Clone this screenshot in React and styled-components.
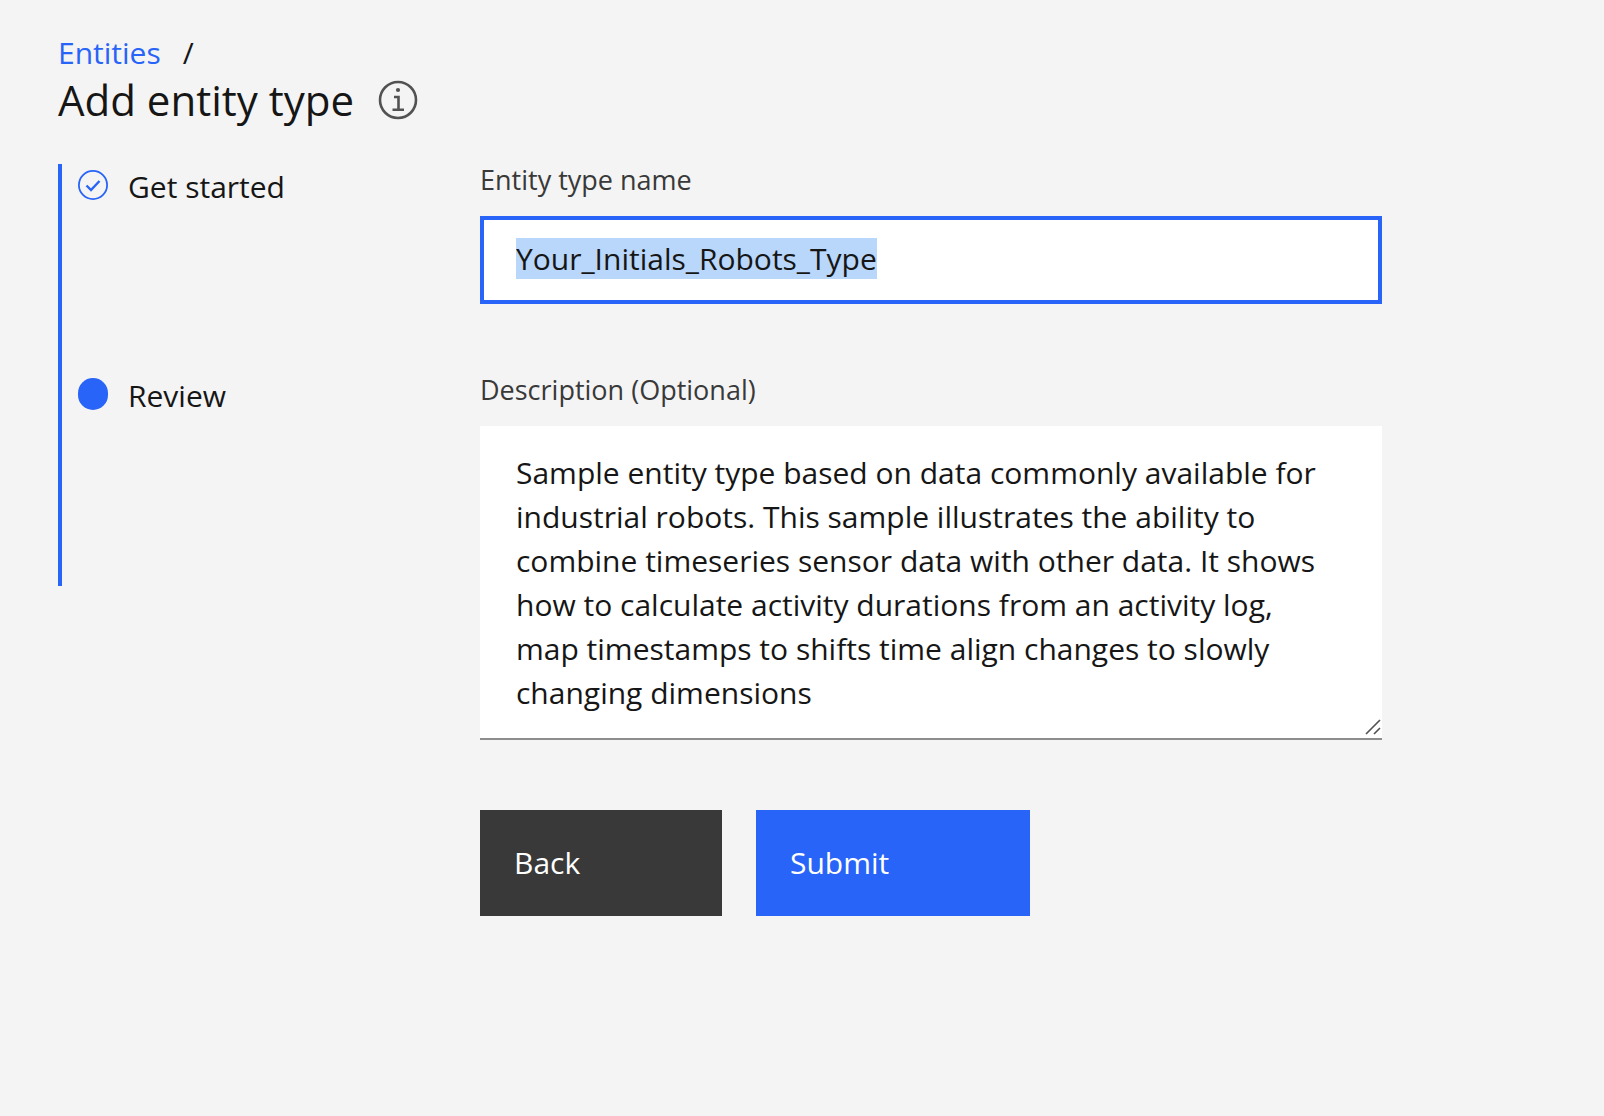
import React, { useEffect, useRef } from 'react';
import styled, { createGlobalStyle } from 'styled-components';

const blue = '#2864f7';
const ink = '#161616';

const GlobalStyle = createGlobalStyle`
  *, *::before, *::after { box-sizing: border-box; }
  body {
    margin: 0;
    background: #f4f4f4;
    color: ${ink};
    font-family: "Open Sans", "Noto Sans", sans-serif;
    font-size: 30px;
    line-height: 44px;
  }
`;

const Page = styled.div`
  padding: 32px 58px;
`;

const Breadcrumb = styled.nav`
  display: flex;
  gap: 22px;
  line-height: 42px;
`;

const BreadcrumbLink = styled.a`
  color: ${blue};
  text-decoration: none;
`;

const TitleRow = styled.header`
  display: flex;
  align-items: center;
  gap: 24px;
`;

const Title = styled.h1`
  margin: 0;
  font-size: 42px;
  font-weight: 400;
  line-height: 52px;
`;

const InfoButton = styled.button`
  display: flex;
  padding: 0;
  border: 0;
  background: none;
  color: #525252;
`;

const Columns = styled.main`
  display: grid;
  grid-template-columns: 422px minmax(0, 902px);
  align-items: start;
  margin-top: 38px;
`;

const Steps = styled.ol`
  margin: 0;
  padding: 0 0 4px;
  list-style: none;
  border-left: 4px solid ${blue};
`;

const Step = styled.li`
  display: flex;
  align-items: flex-start;
  gap: 20px;
  height: 209px;
  padding-left: 16px;
  line-height: 46px;
`;

const StepIcon = styled.svg`
  flex: none;
  margin-top: 5px;
  color: ${blue};
`;

const Form = styled.form`
  display: flex;
  flex-direction: column;
`;

const Field = styled.div`
  display: flex;
  flex-direction: column;
  gap: 20px;
  margin-bottom: 70px;
`;

const Label = styled.label`
  color: #393939;
  font-size: 27px;
  line-height: 32px;
`;

const TextInput = styled.input`
  width: 100%;
  height: 88px;
  padding: 0 32px 4px;
  border: 4px solid ${blue};
  border-radius: 0;
  outline: 0;
  background: #fff;
  color: ${ink};
  font: inherit;
  line-height: 40px;
  &::selection {
    background: #b9d6fb;
    color: ${ink};
  }
`;

const TextAreaBox = styled.div`
  position: relative;
  display: flex;
`;

const TextArea = styled.textarea`
  width: 100%;
  height: 314px;
  padding: 25px 48px 23px 36px;
  border: 0;
  border-bottom: 2px solid #8d8d8d;
  border-radius: 0;
  outline: 0;
  overflow: hidden;
  resize: vertical;
  background: #fff;
  color: ${ink};
  font: inherit;
  &::-webkit-resizer { background: transparent; }
`;

const ResizeGrip = styled.svg`
  position: absolute;
  right: 1px;
  bottom: 5px;
  pointer-events: none;
`;

const Actions = styled.div`
  display: flex;
  gap: 34px;
`;

const Button = styled.button`
  min-width: ${(p) => (p.$primary ? 274 : 242)}px;
  height: 106px;
  padding: 0 34px;
  border: 0;
  background: ${(p) => (p.$primary ? blue : '#393939')};
  color: #fff;
  font: inherit;
  text-align: left;
`;

const InfoIcon = () => (
  <svg width="40" height="40" viewBox="0 0 40 40" fill="none" aria-hidden="true">
    <circle cx="20" cy="20" r="18" stroke="currentColor" strokeWidth="2.6" />
    <circle cx="20" cy="10" r="2.1" fill="currentColor" />
    <path d="M16 17h4.5v12.5M14.5 29.8h11.5" stroke="currentColor" strokeWidth="2.6" />
  </svg>
);

const CompleteIcon = () => (
  <StepIcon width="30" height="32" viewBox="0 0 30 32" fill="none" aria-hidden="true">
    <circle cx="15" cy="16" r="14.1" stroke="currentColor" strokeWidth="1.8" />
    <path d="M8.5 16.5l4.5 4.5 8.5-9" stroke="currentColor" strokeWidth="2.4" />
  </StepIcon>
);

const CurrentIcon = () => (
  <StepIcon width="30" height="32" viewBox="0 0 30 32" aria-hidden="true">
    <rect width="30" height="32" rx="15" fill="currentColor" />
  </StepIcon>
);

const description =
  'Sample entity type based on data commonly available for industrial robots. This sample illustrates the ability to combine timeseries sensor data with other data. It shows how to calculate activity durations from an activity log, map timestamps to shifts time align changes to slowly changing dimensions';

export default function App() {
  const nameRef = useRef(null);

  useEffect(() => {
    nameRef.current.focus();
    nameRef.current.select();
  }, []);

  return (
    <Page>
      <GlobalStyle />
      <Breadcrumb aria-label="Breadcrumb">
        <BreadcrumbLink href="#entities">Entities</BreadcrumbLink>
        <span>/</span>
      </Breadcrumb>
      <TitleRow>
        <Title>Add entity type</Title>
        <InfoButton type="button" aria-label="Information"><InfoIcon /></InfoButton>
      </TitleRow>
      <Columns>
        <Steps>
          <Step><CompleteIcon />Get started</Step>
          <Step aria-current="step"><CurrentIcon />Review</Step>
        </Steps>
        <Form onSubmit={(e) => e.preventDefault()}>
          <Field>
            <Label htmlFor="type-name">Entity type name</Label>
            <TextInput id="type-name" ref={nameRef} spellCheck={false} defaultValue="Your_Initials_Robots_Type" />
          </Field>
          <Field>
            <Label htmlFor="type-description">Description (Optional)</Label>
            <TextAreaBox>
              <TextArea id="type-description" spellCheck={false} defaultValue={description} />
              <ResizeGrip width="16" height="16" viewBox="0 0 16 16" stroke="#525252" strokeWidth="1.6" aria-hidden="true">
                <path d="M1 15L15 1M9 15l6-6" />
              </ResizeGrip>
            </TextAreaBox>
          </Field>
          <Actions>
            <Button type="button">Back</Button>
            <Button type="submit" $primary>Submit</Button>
          </Actions>
        </Form>
      </Columns>
    </Page>
  );
}
